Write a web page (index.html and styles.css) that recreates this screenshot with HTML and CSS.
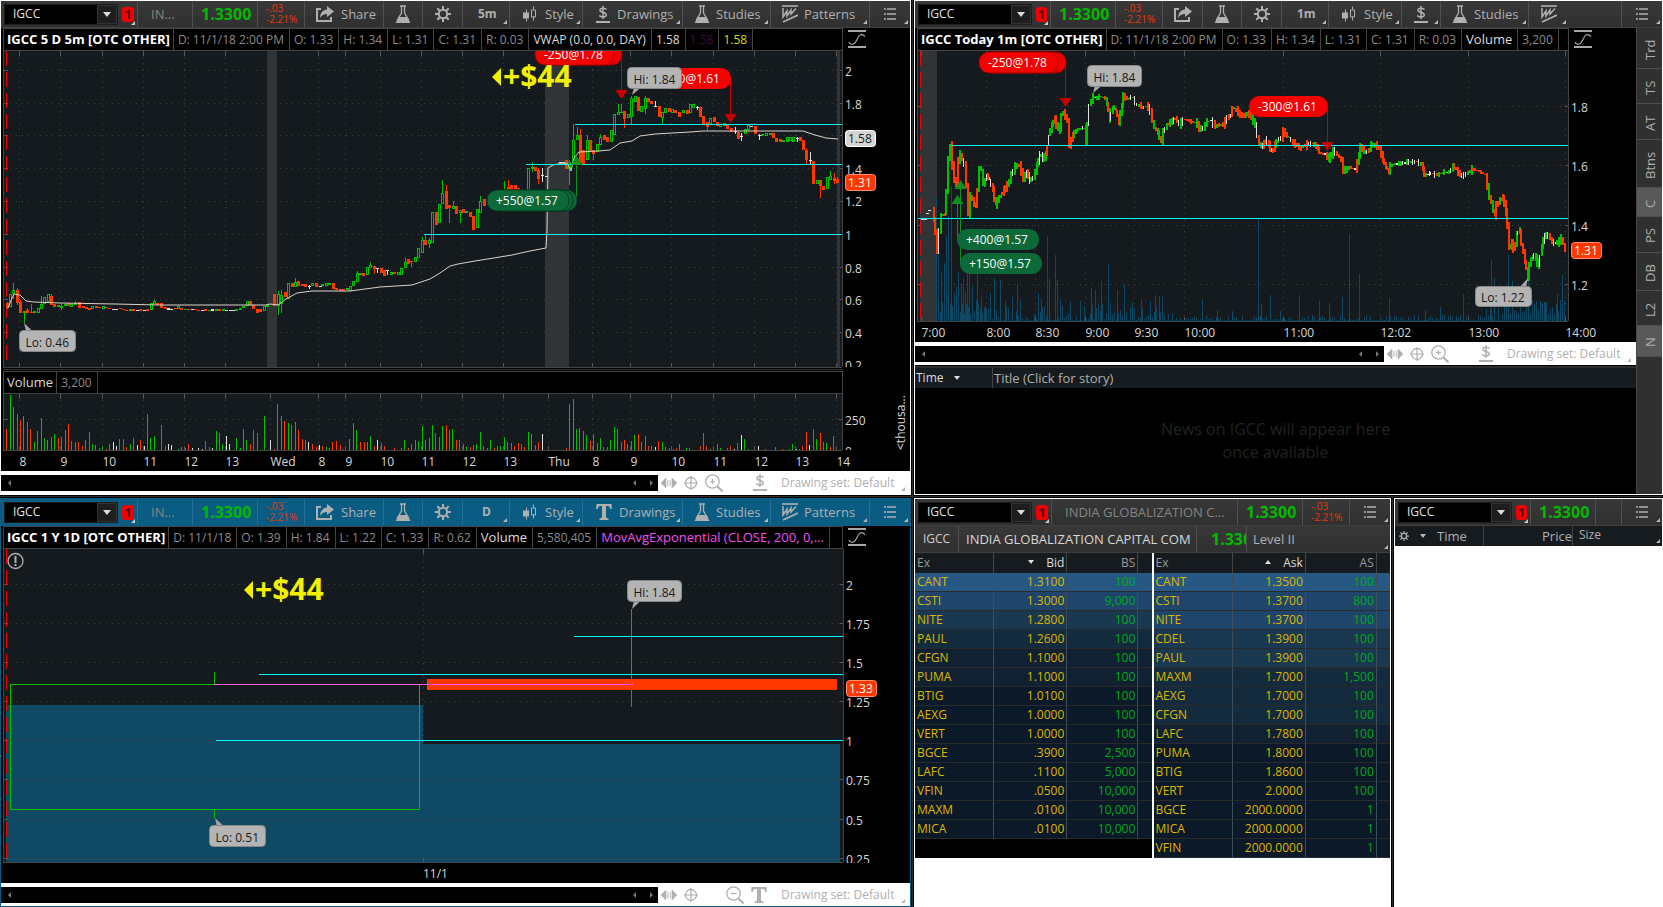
FILE: index.html
```html
<!DOCTYPE html>
<html lang="en">
<head>
<meta charset="utf-8">
<title>IGCC workspace</title>
<link rel="stylesheet" href="styles.css">
</head>
<body>
<svg class="sprite" aria-hidden="true">
  <symbol id="i-share" viewBox="0 0 18 16"><path d="M5 3H1v12h14v-4" fill="none" stroke="currentColor" stroke-width="2"/><path d="M11 0l7 5.500-7 5.500V8C8 8 5.500 9 4 12c0-5 3-8 7-8.500z" fill="currentColor"/></symbol>
  <symbol id="i-flask" viewBox="0 0 16 18"><path d="M5 1h6M6.500 1v7L2 15.500M9.500 1v7l4.500 7.500" fill="none" stroke="currentColor" stroke-width="1.300"/><path d="M4 12h8l3.500 6H.5z" fill="currentColor"/></symbol>
  <symbol id="i-gear" viewBox="0 0 16 16"><circle cx="8" cy="8" r="4.200" fill="none" stroke="currentColor" stroke-width="2"/><path d="M8 0v3M8 13v3M0 8h3M13 8h3M2.300 2.300l2.200 2.200M11.500 11.500l2.200 2.200M13.700 2.300l-2.200 2.200M4.500 11.500l-2.200 2.200" stroke="currentColor" stroke-width="2"/></symbol>
  <symbol id="i-candles" viewBox="0 0 14 16"><path d="M3.500 3v12M10.500 0v3M10.500 10v4" stroke="currentColor"/><path d="M0 6h6v6H0z" fill="currentColor"/><path d="M8.500 3.500h4v7h-4z" fill="none" stroke="currentColor"/></symbol>
  <symbol id="i-dollar" viewBox="0 0 14 17"><path d="M7 0v13M10.500 3.500C9.500 2 4 1.500 4 4.200S10.300 6 10.300 8.800 4.500 11.500 3.300 9.500" fill="none" stroke="currentColor" stroke-width="1.500"/><path d="M0 15h14v2H0z" fill="currentColor"/></symbol>
  <symbol id="i-tee" viewBox="0 0 16 16"><path d="M.5 0h15l.3 5h-1.600C14 2.500 13 2 10 2v10.500c0 1.500.8 1.700 2.500 2V16h-9v-1.500c1.700-.3 2.500-.5 2.500-2V2c-3 0-4 .5-4.200 3H.2z" fill="currentColor"/></symbol>
  <symbol id="i-pattern" viewBox="0 0 16 18"><path d="M0 1h16" stroke="currentColor" stroke-width="1.600"/><path d="M1 3v9l4-6v5l4-6v4l5-5.500" fill="none" stroke="currentColor" stroke-width="1.500"/><path d="M1 17l15-7" stroke="currentColor" stroke-width="1.800"/></symbol>
  <symbol id="i-list" viewBox="0 0 12 12"><path d="M0 1h2M3 1h9M0 6h2M3 6h9M0 11h2M3 11h9" stroke="currentColor" stroke-width="1.500"/></symbol>
  <symbol id="i-wave" viewBox="0 0 18 18"><path d="M0 1h18M0 17h18" stroke="currentColor" stroke-width="2"/><path d="M1 12c1.500 3.500 5.500 3 7.500-1.500S12.500 2 17 6.500" fill="none" stroke="currentColor" stroke-width="1.200"/></symbol>
  <symbol id="i-resize" viewBox="0 0 16 10"><path d="M0 5l5-5v10zM16 5l-5-5v10zM6.500 2v6M8 2v6M9.500 2v6" fill="currentColor" stroke="currentColor" stroke-width=".6"/></symbol>
  <symbol id="i-cross" viewBox="0 0 14 14"><circle cx="7" cy="7" r="5.500" fill="none" stroke="currentColor" stroke-width="1.300"/><path d="M7 0v14M0 7h14" stroke="currentColor" stroke-width="1.200"/></symbol>
  <symbol id="i-zoomin" viewBox="0 0 18 18"><circle cx="7.500" cy="7.500" r="6.700" fill="none" stroke="currentColor" stroke-width="1.300"/><path d="M12.500 12.500l5 5" stroke="currentColor" stroke-width="2"/><path d="M5 7.500h5M7.500 5v5" stroke="currentColor" stroke-width="1.200"/></symbol>
  <symbol id="i-zoomout" viewBox="0 0 18 18"><circle cx="7.500" cy="7.500" r="6.700" fill="none" stroke="currentColor" stroke-width="1.300"/><path d="M12.500 12.500l5 5" stroke="currentColor" stroke-width="2"/><path d="M4.500 7.500h6" stroke="currentColor" stroke-width="1.200"/></symbol>
</svg>

<main class="desk">
  <section class="panel" aria-label="5 day chart">
    <div class="toolbar">
      <div class="cell symbol"><span class="combo"><input value="IGCC" aria-label="Symbol"><button aria-label="Symbol list"></button></span><button class="link">1</button></div>
      <div class="cell name grow">IN...</div>
      <div class="cell price">1.3300</div>
      <div class="cell change"><span>-.03</span><span>-2.21%</span></div>
      <button class="cell w79 share"><svg class="i18"><use href="#i-share"/></svg>Share</button>
      <button class="cell w39" aria-label="Studies"><svg class="i16"><use href="#i-flask"/></svg></button>
      <button class="cell w40" aria-label="Settings"><svg class="i16g"><use href="#i-gear"/></svg></button>
      <button class="cell w47 corner strong">5m</button>
      <button class="cell w73 corner"><svg class="i14"><use href="#i-candles"/></svg>Style</button>
      <button class="cell w100 corner"><svg class="i14"><use href="#i-dollar"/></svg>Drawings</button>
      <button class="cell w88 corner"><svg class="i16"><use href="#i-flask"/></svg>Studies</button>
      <button class="cell w99 corner"><svg class="i16"><use href="#i-pattern"/></svg>Patterns</button>
      <button class="cell w40 corner" aria-label="Menu"><svg class="i12"><use href="#i-list"/></svg></button>
    </div>
    <div class="legendrow">
      <div class="legend"><b>IGCC 5 D 5m [OTC OTHER]</b><span>D: 11/1/18 2:00 PM</span><span>O: 1.33</span><span>H: 1.34</span><span>L: 1.31</span><span>C: 1.31</span><span>R: 0.03</span><span class="lit">VWAP (0.0, 0.0, DAY)</span><span class="lit">1.58</span><span class="plum">1.58</span><span class="yellow">1.58</span></div>
      <svg class="wave"><use href="#i-wave"/></svg>
    </div>
    <div class="plot" id="five"></div>
    <div class="legendrow sub"><div class="legend"><span class="lit word">Volume</span><span>3,200</span></div><i class="wave"></i></div>
    <div class="plot vol" id="fivevol"></div>
    <div class="foot">
      <div class="scroll"><button class="l" aria-label="Left end"></button><button class="l" aria-label="Left"></button><button class="r" aria-label="Right"></button></div>
      <div class="tools"><button aria-label="Fit"><svg class="i16r"><use href="#i-resize"/></svg></button><button aria-label="Crosshair"><svg class="i14c"><use href="#i-cross"/></svg></button><button aria-label="Zoom in"><svg class="i18z"><use href="#i-zoomin"/></svg></button><button class="last" aria-label="Drawing tool"><svg class="i14"><use href="#i-dollar"/></svg></button></div>
      <button class="set corner">Drawing set: Default</button>
    </div>
  </section>

  <section class="panel" aria-label="Today chart">
    <div class="toolbar">
      <div class="cell symbol narrow"><span class="combo"><input value="IGCC" aria-label="Symbol"><button aria-label="Symbol list"></button></span><button class="link">1</button></div>
      <div class="cell price">1.3300</div>
      <div class="cell change"><span>-.03</span><span>-2.21%</span></div>
      <button class="cell w40" aria-label="Share"><svg class="i18"><use href="#i-share"/></svg></button>
      <button class="cell w39" aria-label="Studies"><svg class="i16"><use href="#i-flask"/></svg></button>
      <button class="cell w40" aria-label="Settings"><svg class="i16g"><use href="#i-gear"/></svg></button>
      <button class="cell w47 corner strong">1m</button>
      <button class="cell w73 corner"><svg class="i14"><use href="#i-candles"/></svg>Style</button>
      <button class="cell w39 corner" aria-label="Drawings"><svg class="i14"><use href="#i-dollar"/></svg></button>
      <button class="cell w88 corner"><svg class="i16"><use href="#i-flask"/></svg>Studies</button>
      <button class="cell w39 corner open" aria-label="Patterns"><svg class="i16"><use href="#i-pattern"/></svg></button>
      <div class="cell grow"></div>
      <button class="cell w40 corner" aria-label="Menu"><svg class="i12"><use href="#i-list"/></svg></button>
    </div>
    <div class="split">
      <div class="stack">
        <div class="legendrow">
          <div class="legend"><b>IGCC Today 1m [OTC OTHER]</b><span>D: 11/1/18 2:00 PM</span><span>O: 1.33</span><span>H: 1.34</span><span>L: 1.31</span><span>C: 1.31</span><span>R: 0.03</span><span class="lit word">Volume</span><span>3,200</span></div>
          <svg class="wave"><use href="#i-wave"/></svg>
        </div>
        <div class="plot" id="today"></div>
        <div class="foot">
          <div class="scroll"><button class="l" aria-label="Left end"></button><button class="l" aria-label="Left"></button><button class="r" aria-label="Right"></button></div>
          <div class="tools"><button aria-label="Fit"><svg class="i16r"><use href="#i-resize"/></svg></button><button aria-label="Crosshair"><svg class="i14c"><use href="#i-cross"/></svg></button><button aria-label="Zoom in"><svg class="i18z"><use href="#i-zoomin"/></svg></button><button class="last" aria-label="Drawing tool"><svg class="i14"><use href="#i-dollar"/></svg></button></div>
          <button class="set corner">Drawing set: Default</button>
        </div>
        <div class="news">
          <div class="newshead"><button class="sort">Time</button><span>Title (Click for story)</span></div>
          <p>News on IGCC will appear here<br>once available</p>
        </div>
      </div>
      <nav class="rail"><button class="h41">Trd</button><button class="h35">TS</button><button class="h36">AT</button><button class="h48">Btns</button><button class="h29 on">C</button><button class="h36">PS</button><button class="h38">DB</button><button class="h35">L2</button><button class="h31 on">N</button></nav>
    </div>
  </section>

  <section class="panel active" aria-label="1 year chart">
    <div class="toolbar">
      <div class="cell symbol"><span class="combo"><input value="IGCC" aria-label="Symbol"><button aria-label="Symbol list"></button></span><button class="link">1</button></div>
      <div class="cell name grow">IN...</div>
      <div class="cell price">1.3300</div>
      <div class="cell change"><span>-.03</span><span>-2.21%</span></div>
      <button class="cell w79 share"><svg class="i18"><use href="#i-share"/></svg>Share</button>
      <button class="cell w39" aria-label="Studies"><svg class="i16"><use href="#i-flask"/></svg></button>
      <button class="cell w40" aria-label="Settings"><svg class="i16g"><use href="#i-gear"/></svg></button>
      <button class="cell w47 corner strong wide">D</button>
      <button class="cell w73 corner"><svg class="i14"><use href="#i-candles"/></svg>Style</button>
      <button class="cell w100 corner"><svg class="i16g"><use href="#i-tee"/></svg>Drawings</button>
      <button class="cell w88 corner"><svg class="i16"><use href="#i-flask"/></svg>Studies</button>
      <button class="cell w99 corner"><svg class="i16"><use href="#i-pattern"/></svg>Patterns</button>
      <button class="cell w40 corner" aria-label="Menu"><svg class="i12"><use href="#i-list"/></svg></button>
    </div>
    <div class="legendrow">
      <div class="legend"><b>IGCC 1 Y 1D [OTC OTHER]</b><span>D: 11/1/18</span><span>O: 1.39</span><span>H: 1.84</span><span>L: 1.22</span><span>C: 1.33</span><span>R: 0.62</span><span class="lit word">Volume</span><span>5,580,405</span><span class="pink word">MovAvgExponential (CLOSE, 200, 0,...</span></div>
      <svg class="wave"><use href="#i-wave"/></svg>
    </div>
    <div class="plot" id="year"></div>
    <div class="foot">
      <div class="scroll"><button class="l" aria-label="Left end"></button><button class="l" aria-label="Left"></button><button class="r" aria-label="Right"></button></div>
      <div class="tools"><button aria-label="Fit"><svg class="i16r"><use href="#i-resize"/></svg></button><button aria-label="Crosshair"><svg class="i14c"><use href="#i-cross"/></svg></button><button class="last" aria-label="Zoom out"><svg class="i18z"><use href="#i-zoomout"/></svg></button><button aria-label="Text tool"><svg class="i16g"><use href="#i-tee"/></svg></button></div>
      <button class="set corner">Drawing set: Default</button>
    </div>
  </section>

  <div class="pair">
    <section class="panel" aria-label="Level II">
      <div class="toolbar">
        <div class="cell symbol"><span class="combo"><input value="IGCC" aria-label="Symbol"><button aria-label="Symbol list"></button></span><button class="link">1</button></div>
        <div class="cell name grow">INDIA GLOBALIZATION C...</div>
        <div class="cell price">1.3300</div>
        <div class="cell change"><span>-.03</span><span>-2.21%</span></div>
        <button class="cell w40 corner" aria-label="Menu"><svg class="i12"><use href="#i-list"/></svg></button>
      </div>
      <div class="toolbar second">
        <div class="cell w44">IGCC</div>
        <div class="cell full">INDIA GLOBALIZATION CAPITAL COM</div>
        <div class="cell price cut">1.3300</div>
        <div class="cell grow corner level">Level II</div>
      </div>
      <div class="book" id="book"></div>
    </section>
    <section class="panel" aria-label="Time and sales">
      <div class="toolbar">
        <div class="cell symbol narrow"><span class="combo"><input value="IGCC" aria-label="Symbol"><button aria-label="Symbol list"></button></span><button class="link">1</button></div>
        <div class="cell price">1.3300</div>
        <div class="cell grow"></div>
        <button class="cell w40 corner" aria-label="Menu"><svg class="i12"><use href="#i-list"/></svg></button>
      </div>
      <div class="tape"><div class="time"><svg class="i10"><use href="#i-gear"/></svg><i></i>Time</div><div class="pr">Price</div><div class="size corner">Size</div></div>
    </section>
  </div>
</main>
<script src="app.js"></script>
</body>
</html>
```

FILE: styles.css
```css
* { box-sizing: border-box; }
body { margin: 0; background: #000; color: #b0b0b0; font: 12px/16px "Open Sans", "Noto Sans", sans-serif; }
button, input { font: inherit; color: inherit; border: 0; background: none; padding: 0; margin: 0; text-align: left; }
.sprite { position: absolute; width: 0; height: 0; }

.desk { display: grid; grid-template-columns: 911fr 749fr; grid-template-rows: 495fr 409fr; gap: 3px; height: 100vh; min-height: 640px; background: #2c2c2c; overflow: hidden; }
.panel { display: flex; flex-direction: column; min-width: 0; min-height: 0; border: 1px solid #fff; background: #fff; box-shadow: 0 0 0 1px #000; overflow: hidden; }
.panel.active { border-color: #0b5c82; }
.pair { display: grid; grid-template-columns: 477fr 269fr; gap: 3px; min-width: 0; min-height: 0; }

.toolbar { display: flex; flex: none; height: 27px; background: linear-gradient(#383838, #303030); border-bottom: 1px solid #3f3f3f; font-size: 13px; }
.active .toolbar { background: #0b5c82; border-color: #0b5c82; }
.cell { position: relative; display: flex; align-items: center; flex: none; justify-content: flex-start; gap: 8px; padding: 0 10px; border-right: 1px solid #505050; white-space: nowrap; overflow: hidden; }
.active .cell { border-color: #20709a; }
.cell:last-child { border-right: 0; }
.cell svg { flex: none; }
.cell.grow { flex: 1 1 0; min-width: 0; }
.symbol { width: 137px; padding: 0 3px; gap: 4px; }
.symbol.narrow { width: 136px; }
.combo { display: flex; width: 114px; height: 21px; background: #000; border: 1px solid #1b1b1b; }
.combo input { flex: 1; min-width: 0; padding-left: 8px; color: #e4e4e4; outline: 0; font-size: 12px; }
.combo button { width: 20px; background: #1e1e1e; border: 1px solid #333; display: grid; place-items: center; }
.combo button::after { content: ""; border: 4px solid transparent; border-top: 5px solid #ddd; border-bottom: 0; }
.link { position: relative; width: 12px; height: 15px; border-radius: 3px; background: #f40000; color: #5a1010; text-align: center; line-height: 15px; font-size: 13px; font-weight: bold; }
.link::after { content: ""; position: absolute; right: -1px; bottom: -3px; border: 2px solid transparent; border-right-color: #ccc; border-bottom-color: #ccc; }
.name { padding-left: 13px; color: #868686; }
.price { width: 65px; padding: 0 0 0 8px; font-size: 16px; font-weight: bold; color: #00b900; }
.change { width: 47px; padding: 0 0 0 8px; flex-direction: column; align-items: flex-start; justify-content: center; gap: 0; font-size: 10px; line-height: 11px; color: #e23a0c; }
.w39 { width: 39px; } .w40 { width: 40px; } .w44 { width: 44px; } .w47 { width: 47px; } .w73 { width: 73px; }
.w79 { width: 79px; } .w88 { width: 88px; } .w99 { width: 99px; } .w100 { width: 100px; }
.w39, .w40, .w44 { justify-content: center; }
.share { padding-left: 11px; gap: 7px; }
.w88, .w99 { padding-left: 11px; gap: 6px; }
.w73 { padding-left: 13px; }
.w100 { padding-left: 13px; gap: 7px; }
.strong { font-size: 12px; font-weight: bold; padding-left: 15px; }
.wide { padding-left: 19px; }
.w40.corner { justify-content: flex-start; padding-left: 14px; }
.w39.corner { padding: 0 11px; }
.open { border-right: 0; }
.corner { position: relative; }
.corner::after { content: ""; position: absolute; right: 2px; bottom: 3px; border: 2px solid transparent; border-right-color: #b8b8b8; border-bottom-color: #b8b8b8; }
.i10 { width: 10px; height: 10px; } .i12 { width: 12px; height: 12px; } .i14 { width: 14px; height: 17px; } .i14c { width: 14px; height: 14px; }
.i16 { width: 16px; height: 18px; } .i16g { width: 16px; height: 16px; } .i16r { width: 16px; height: 10px; } .i18 { width: 18px; height: 16px; } .i18z { width: 18px; height: 18px; }

.legendrow { display: flex; flex: none; height: 23px; padding-left: 2px; background: #000; }
.legend { display: flex; flex: 1; min-width: 0; border: 1px solid #444; overflow: hidden; font-size: 12px; line-height: 21px; color: #8a8a8a; white-space: nowrap; }
.legend > * { padding: 0 5px 0 4px; border-right: 1px solid #444; }
.legend > :first-child { padding: 0 3px; }
.legend b { color: #fff; font-size: 13px; }
.legend .word { font-size: 13px; }
.legend .lit { color: #dcdcdc; }
.legend .plum { color: #3c0c3c; }
.legend .yellow { color: #d8d800; }
.legend .pink { color: #f050f0; }
.wave { flex: none; width: 18px; height: 18px; margin: 2px 44px 0 5px; color: #a8a8a8; }

.plot { flex: 1 1 0; min-height: 0; background: #000; overflow: hidden; }
.plot.vol { flex: none; height: 77px; }
.plot svg { display: block; }
.plot text { font-size: 12px; fill: #d8d8d8; }
.plot .dark { fill: #181818; }
.plot .white { fill: #fff; }
.plot .gain { font-size: 30px; font-weight: bold; fill: #f0f000; }

.foot { display: flex; flex: none; align-items: center; height: 23px; background: #fff; color: #b0b0b0; }
.scroll { display: flex; flex: 1; align-items: center; justify-content: flex-end; gap: 14px; height: 16px; padding: 0 5px 0 7px; background: #000; }
.scroll button { border: 3px solid transparent; }
.scroll .l { border-right-color: #777; border-left: 0; }
.scroll .l:first-child { margin-right: auto; }
.scroll .r { border-left-color: #777; border-right: 0; }
.tools { display: flex; flex: none; align-items: center; width: 111px; gap: 7px; padding: 0 2px 0 3px; }
.tools button { display: flex; }
.tools .last { margin-left: auto; }
.set { flex: none; width: 141px; padding-left: 12px; font-size: 12px; }
.set.corner::after { right: 5px; bottom: 0; }

.split { display: flex; flex: 1; min-height: 0; }
.stack { display: flex; flex: 1; flex-direction: column; min-width: 0; }
.news { flex: none; height: 129px; border-top: 1px solid #000; background: #000; }
.newshead { display: flex; height: 22px; align-items: center; border-top: 2px solid #2c2c2c; background: #161b1f; font-size: 12px; }
.newshead .sort { display: flex; align-items: center; gap: 10px; width: 78px; padding-left: 1px; height: 20px; border-right: 1px solid #444; color: #dcdcdc; }
.sort::after { content: ""; border: 3px solid transparent; border-top: 4px solid #ddd; border-bottom: 0; }
.newshead span { padding-left: 1px; font-size: 13px; }
.news p { margin: 30px 0 0; text-align: center; font-size: 16px; line-height: 23px; color: #222; }
.rail { flex: none; width: 26px; background: #303030; border-left: 1px solid #484848; }
.rail button { display: flex; align-items: center; justify-content: center; width: 100%; padding-bottom: 3px; border-top: 1px solid #505050; writing-mode: vertical-rl; transform: rotate(180deg); font-size: 13px; }
.rail .on { background: #585858; }
.h29 { height: 29px; } .h31 { height: 31px; } .h35 { height: 35px; } .h36 { height: 36px; } .h38 { height: 38px; } .h41 { height: 41px; } .h48 { height: 48px; }

.second .w44 { width: 44px; color: #d0d0d0; font-size: 12px; }
.second .full { flex: 0 1 238px; padding: 0 4px 0 7px; color: #d8d8d8; font-size: 13px; }
.second .cut { width: 50px; padding-left: 14px; }
.second .level { padding-left: 6px; font-size: 13px; }
.book { display: grid; grid-template-columns: 1fr 1fr; gap: 2px; }
.side { background: #000; }
.side table { width: 100%; table-layout: fixed; border-collapse: separate; border-spacing: 0; }
.side th, .side td { height: 19px; padding: 0 2px; border-right: 1px solid #3d4d5c; border-bottom: 1px solid #2a2a2a; font-weight: normal; text-align: right; line-height: 18px; }
.side th { height: 20px; background: #161b1f; border-color: #444; border-bottom: 0; color: #999; }
.side th.key { color: #ddd; }
.side th.key i { display: inline-block; margin: 0 12px 3px 0; border: 3px solid transparent; }
.side th.key i.down { border-top: 4px solid #ddd; border-bottom: 0; }
.side th.key i.up { border-bottom: 4px solid #ddd; border-top: 0; }
.side td { color: #dcb800; }
.side th:first-child, .side td:first-child { text-align: left; }
.side td.qty { color: #00aa1c; }
.side th:last-child, .side td:last-child { border-right: 0; }
.c1 { width: 79px; } .c2 { width: 31%; } .c3 { width: 30%; }
.t1 { background: #265883; } .t2 { background: #1f466a; } .t3 { background: #1a3850; } .t4 { background: #142b3d; } .t5 { background: #112132; } .t6 { background: #0c1928; }

.tape { display: flex; height: 20px; background: #161b1f; align-items: center; font-size: 13px; }
.time { display: flex; align-items: center; width: 89px; height: 20px; padding-left: 4px; gap: 11px; border-right: 1px solid #444; }
.time i { border: 3px solid transparent; border-top: 4px solid #bbb; border-bottom: 0; }
.pr { width: 89px; height: 20px; line-height: 20px; text-align: right; border-right: 1px solid #444; }
.size { flex: 1; height: 20px; padding-left: 6px; font-size: 12px; line-height: 18px; }
```

FILE: app.js
```js
const GREEN = '#00c000', RED = '#ff3800', WHITE = '#e0e0e0', CYAN = '#00f8f8', GRID = '#3c4144', BG = '#151a1e';
const INK = { G: GREEN, R: RED, W: WHITE };

/* A frame maps design coordinates onto the container; only positions stretch, never glyphs. */
function frame(id, x0, y0, w0, h0) {
  const el = document.getElementById(id);
  const w = el.clientWidth, h = el.clientHeight, kx = w / w0, ky = h / h0;
  const out = [];
  return {
    X: v => (v - x0) * kx, Y: v => (v - y0) * ky,
    rect(x, y, rw, rh, fill, extra = '') { out.push(`<rect x="${this.X(x)}" y="${this.Y(y)}" width="${Math.max(0, rw * kx)}" height="${Math.max(0, rh * ky)}" fill="${fill}" ${extra}/>`); },
    line(x1, y1, x2, y2, c, extra = '') { out.push(`<path d="M${this.X(x1)} ${this.Y(y1)}L${this.X(x2)} ${this.Y(y2)}" stroke="${c}" fill="none" ${extra}/>`); },
    poly(pts, c) { out.push(`<polyline points="${pts.map(p => this.X(p[0]) + ',' + this.Y(p[1])).join(' ')}" fill="none" stroke="${c}"/>`); },
    fill(pts, c) { out.push(`<polygon points="${pts.map(p => this.X(p[0]) + ',' + this.Y(p[1])).join(' ')}" fill="${c}"/>`); },
    text(x, y, s, cls = '', extra = '') { out.push(`<text x="${this.X(x)}" y="${this.Y(y)}" class="${cls}" ${extra}>${s}</text>`); },
    raw(s) { out.push(s); },
    done() { el.innerHTML = `<svg width="${w}" height="${h}">${out.join('')}</svg>`; }
  };
}

function gridlines(f, xs, ys, l, t, r, b) {
  ys.forEach(y => { f.line(l, y, r, y, GRID, 'stroke-dasharray="1 5"'); f.line(l, y, l + 4, y, '#555'); f.line(r - 3, y, r, y, '#555'); });
  xs.forEach(x => { f.line(x, t, x, b, GRID, 'stroke-dasharray="1 5"'); f.line(x, t, x, t + 5, '#555'); f.line(x, b - 4, x, b, '#555'); });
}
function border(f, l, t, r, b) { f.line(l + .5, t, l + .5, b, '#444'); f.line(r + .5, t, r + .5, b, '#444'); f.line(l, b + .5, r, b + .5, '#444'); }
function callout(f, x, y, w, s, px, py) {
  const by = py > y ? y + 20 : y + 1;
  f.fill([[px, py], [px + 2, by], [px + 9, by]], '#a8a8a8');
  f.rect(x, y, w, 21, '#b4b4b4', 'rx="4" stroke="#888"');
  f.text(x + 6, y + 16, s, 'dark');
}
function tag(f, x, y, s, fill, stroke, cls) { f.rect(x + .5, y + .5, 30, 16, fill, `rx="3" stroke="${stroke}"`); f.text(x + 3, y + 13, s, cls); }
function pill(f, x, y, w, s, fill, stacked) {
  const edge = fill === '#f40000' ? '#a00000' : '#04351c';
  for (let i = stacked; i >= 0; i--) f.rect(x + i * 4, y, w, 21, fill, i || stacked ? `rx="10" stroke="${edge}" stroke-width=".8"` : 'rx="10"');
  f.text(x + 9, y + 15, s, 'white');
}
function arrow(f, x, y, down, c) { f.fill(down ? [[x - 6, y], [x + 6, y], [x, y + 9]] : [[x - 6, y + 9], [x + 6, y + 9], [x, y]], c); }
function gain(f, x, y) { f.fill([[x, y - 10], [x + 9, y - 19], [x + 9, y - 1]], '#f0f000'); f.text(x + 11, y, '+$44', 'gain'); }

/* x, colour, body top, body bottom, [high], [low] */
const CANDLES = `7R303,308,302,309 10G294,307 13G290,294,283,299 17R290,303,288,305 20R302,313,300,313 24G311,313,311,323 27R310,313,308 31R312,313,304 34G311,313 38G308,313
41G304,309,296 44G297,304 48G294,302 51R296,305,294 54R304,307 58G305,307 61G306,308,304,310 65G304,306 68R303,306 71G304,307 75G303,305,301 79R302,308 83R306,308 86R307,309 89R308,310 92G306,309 96R306,308 99R307,308
103G306,309 106R307,308 109R308,309 113W309,310 116W309,310 120R308,309 123R309,310 126R310,311 130G309,311 133R309,311 137W310,311 140R309,311 144W310,311 147R309,311 151G303,310 154G301,304,300 157R303,305 161R303,308 165R307,309 168W308,310 171W309,310 175R308,309 178G306,309
181R308,310 185G309,310 188R309,310 192W309,310 195R309,310 198R310,311 202W310,311 205R309,311 209G310,311 212W309,311 216G309,311 219R309,311 223G309,311 226W310,311 230W310,311 233W310,311 236G309,311 240G308,310 243G306,308 247G301,306 250R301,305 253R305,309 257R309,313 260R309,312 264G306,311 267G305,307
274R294,306 278G294,306,291,315 281G295,304,290,313 285R292,297 288G283,299 292R283,287 295G282,287,278 298R281,286 302R284,286 305R284,287 309W286,287,285,289 312G283,286 316R283,287 320W286,287 322G284,286 326G283,286 329G283,285 333R283,289 336R288,290 340R289,291 343R289,291 347G288,290
350G286,291 353G281,286 357G273,282,271 360G273,275 363R273,276 367G267,275 370G265,268,262 374R266,269,266,274 377W268,269,268,273 381R268,273 384R270,276 387W270,271,270,275 391G272,275 394R272,274 398G272,275 401G268,275 405G262,268,258 408R259,264 411R261,262,261,267 415G257,262 418G248,258
422G240,253,237 425R240,245,235 429G240,244,238,248 432G212,243 436R212,225 439G204,223 442G193,204,180 446R191,209,185 449R205,208,205,223 453G206,209,201 456R206,214 460G210,213,210,223 463R209,213 466G211,213 470R212,217 473R216,230 477G209,228 480G201,213,196 484R199,206 504G192,200,181 508R187,190,180 511R185,190 515R185,190 518R188,192
528G168,191 532G167,169,162,172 535R167,171 538R170,179,168,184 542W175,176,168,182 546W176,177 560W162,163 563W162,163 566R160,169 569G162,169,160,185 573G140,165,124 577G135,140,127 580R135,163,129 583R150,164 587G140,160,135 590R140,151 593R150,154,150,160 597G144,152 600G137,145,134 604R135,140 607R137,142 611G130,142
614G114,135 618G112,115,104 621G112,113,104 624R111,119,111,128 628G114,118 631G98,117,96,124 635G96,102 638R97,111 641G106,112 645G98,109,96,114 648R98,102 651R101,104 655W106,107,101 659R106,117 662G112,118,112,124 665G108,113 669R108,112 672G109,113 675R110,113 679R112,117 683G110,113 687R110,114 690G104,113 693G104,108
697W107,108,106,110 700R107,117 703R116,124 707R122,127,122,130 710G118,124 714R117,122 717R122,126 720G124,127 724G123,126 727R125,129 731R128,132 735W131,132,127,134 738R132,139 741W136,137,133,141 745G129,134 748G125,130 751W126,127 755R126,134 759W135,136,134,140 762G134,136 766G133,136 770G133,135 773R133,138
776R138,142 780R139,142 783G140,142 787G137,142 790G137,141 793G137,142 797W138,139,137,142 800R137,141 803R140,150 806R150,160,148,164 810W160,161,152,164 813R161,184 817G180,184 820R180,186,180,198 823R186,190 827G177,189 830G176,180,171 834R178,181,173,184 837R179,183,177`;
const VOLUME = `6R21 10G55 13G43 17R36 20R30 23G34 27R28 30R21 34G8 37G19 41G32 44G12 47G10 51R13 54G16 58R12 61G13 65G20 68R26 71G9 75G8 78R8 82R4 85R10 89R18 92G6 95R5 99R2 102G4 106R1 109R6 113W8 116W4 119R11 123R11 126R3 130G6 133R12 137W5 140R10 144W4 147R36 150G12 154G14 161R25 165R4 168W6 171W5 178G1 181R3 185G2 188R6 192W2 198W2 202W1 205R9 209G3 212W2 216G19 219R17 222G6 226W14 229W6 236G12 240G2 243G21 246G10 250R6 253R20 257R17 264G34 270W10 274R1 277G46 281G34 284R29 288G27 291R25 295G28 298R20 302R11 305R10 308W8 312R6 316R3 319W5 322R4 326G3 329G2 332R8 336R9 340R5 343R1 349G11 353G27 356G20 360R8 364R8 367G8 370G14 374R4 377W10 381R7 384R4 394R2 401G2 404G10 408R2 411R6 415G10 418G9 422G24 425R10 429G12 432G25 435R17 439G13 442G24 446R25 449R20 452G21 456R10 459G10 463R6 466G3 470R3 473R5 476G6 480G18 483R4 487R2 490G10 494R2 497G4 500G4 504G13 507R8 511R7 514R4 518R7 521R6 524R3 528G18 531G16 535R5 538R8 542W16 566R2 569G46 573G51 576G21 579R22 583G19 586G15 590R9 593R16 597G7 600G12 603R3 607R3 610G10 614G23 617G21 621R8 624R10 627G6 631G9 634G15 638R16 641G8 645G14 648R4 651R4 655W3 658R9 662G8 665G3 669R2 673G1 676R2 679G6 686G2 689G2 700R4 703R17 706R4 710G1 713R1 717R6 720G2 727R2 730R4 734W1 737R7 741W15 744G11 748G1 758W4 765G1 775R3 782R1 789G1 792G6 796W1 799R1 802R4 806R18 809W5 813R21 816G11 820R17 823G8 826G7 830R3 833R14`;
const VWAP = [[8,308],[12,298],[14,294],[20,295],[26,301],[34,302],[60,303],[115,304],[160,305],[240,305],[266,305],[270,304],[278,305],[286,299],[297,293],[312,291],[350,291],[380,287],[412,285],[424,281],[430,279],[440,273],[450,266],[458,264],[475,261],[500,257],[512,255],[530,251],[546,248],[547,230],[548,168],[553,165],[563,163],[568,164],[571,171],[574,158],[579,152],[598,151],[610,150],[620,143],[632,141],[640,136],[655,134],[690,132],[703,131],[803,131],[815,135],[826,138],[838,139]];
const XS = [19.5,60.5,102.5,143.5,184.5,225.5,270.5,318.5,345.5,380.5,421.5,462.5,503.5,548.5,592.5,630.5,671.5,713.5,754.5,795.5,836.5];
const HOURS = ['8','9','10','11','12','13','Wed','8','9','10','11','12','13','Thu','8','9','10','11','12','13','14'];

function drawFive() {
  const f = frame('five', 1, 51, 909, 320);
  f.rect(4, 51, 838, 316, BG);
  gridlines(f, XS, [70.5,103.5,135.5,168.5,201.5,234.5,267.5,299.5,332.5], 4, 51, 842, 367);
  [[267,10],[545,24],[837,3]].forEach(([x, w]) => f.rect(x, 51, w, 316, '#313437'));
  f.line(6.5, 51, 6.5, 363, '#f40000', 'stroke-dasharray="15 6"');
  CANDLES.split(/\s+/).forEach(s => {
    const [, x, c, rest] = s.match(/^(\d+)([GRW])(.+)$/), [t, b, hi = t, lo = b] = rest.split(',').map(Number), n = +x;
    f.line(n + .5, hi, n + .5, lo, INK[c]);
    if (c === 'G' && b - t > 2) f.rect(n - .5, t + .5, 2, b - t - 1, BG, `stroke="${GREEN}"`);
    else f.rect(n - 1, t, 3, Math.max(1, b - t), INK[c]);
  });
  f.poly(VWAP, '#ddd2c8');
  f.line(575, 124.5, 842, 124.5, CYAN); f.line(526, 164.5, 842, 164.5, CYAN); f.line(424, 234.5, 842, 234.5, CYAN);
  f.line(621.5, 60, 621.5, 92, '#c80000'); arrow(f, 621.5, 90, true, '#c80000');
  f.line(730.5, 78, 730.5, 116, '#c80000'); arrow(f, 730.5, 114, true, '#c80000');
  pill(f, 535, 44, 79, '-250@1.78', '#f40000', 2); pill(f, 652, 68, 79, '-300@1.61', '#f40000', 0);
  f.line(576.5, 162, 576.5, 202, '#109020'); arrow(f, 576.5, 156, false, '#109020');
  pill(f, 487, 190, 82, '+550@1.57', '#0b6a38', 2);
  callout(f, 627.5, 67.5, 54, 'Hi: 1.84', 632, 95); callout(f, 19.5, 330.5, 56, 'Lo: 0.46', 24, 323);
  gain(f, 492, 87);
  border(f, 3, 51, 842, 367);
  [['2',76],['1.8',109],['1.4',174],['1.2',206],['1',240],['0.8',273],['0.6',305],['0.4',338]].forEach(([s, y]) => f.text(845, y, s));
  f.raw(`<svg width="100%" height="${f.Y(367)}">`); f.text(845, 370, '0.2'); f.raw('</svg>');
  f.line(3, 369.5, 842, 369.5, '#333');
  tag(f, 845, 130, '1.58', '#d4d4d4', '#fff', 'dark'); tag(f, 845, 174, '1.31', '#ff3800', '#ff9070', 'white');
  f.done();

  const v = frame('fivevol', 1, 394, 909, 77);
  v.rect(4, 394, 838, 56, BG);
  gridlines(v, XS, [419.5], 4, 394, 842, 450);
  VOLUME.split(' ').forEach(s => { const [, x, c, h] = s.match(/^(\d+)([GRW])(\d+)$/); v.rect(+x, 450 - h, 1, +h, INK[c]); });
  border(v, 3, 394, 842, 450);
  XS.forEach((x, i) => v.text(x, 466, HOURS[i]));
  v.text(845, 425, '250');
  v.raw(`<svg width="100%" height="${v.Y(450)}">`); v.text(845, 456, '0'); v.raw('</svg>');
  v.text(905, 450, '&lt;thousa...', '', `transform="rotate(-90 ${v.X(905)} ${v.Y(450)})"`);
  v.done();
}

const PATH = [[933,210],[934,219],[936,232],[938,250],[940,232],[942,215],[945,215],[947,190],[949,160],[951,145],[953,165],[955,178],[957,185],[959,160],[961,153],[963,160],[965,165],[967,185],[969,215],[971,195],[973,200],[976,207],[978,190],[980,168],[982,170],[984,185],[987,175],[990,180],[993,190],[996,205],[998,200],[1001,195],[1004,190],[1008,185],[1012,175],[1016,166],[1020,165],[1024,178],[1027,172],[1030,180],[1034,178],[1037,165],[1040,155],[1043,158],[1046,155],[1049,135],[1052,125],[1055,118],[1057,125],[1060,130],[1062,115],[1064,112],[1066,116],[1068,122],[1070,145],[1073,135],[1077,130],[1080,128],[1085,128],[1086,142],[1088,125],[1090,105],[1093,97],[1096,98],[1100,97],[1104,97],[1107,103],[1110,120],[1113,107],[1116,110],[1119,123],[1122,105],[1124,96],[1127,99],[1130,98],[1134,97],[1136,105],[1140,105],[1143,108],[1147,106],[1151,110],[1153,120],[1155,128],[1158,132],[1162,142],[1164,132],[1167,125],[1171,122],[1176,118],[1180,125],[1184,120],[1188,120],[1192,122],[1196,122],[1200,128],[1204,128],[1208,121],[1212,121],[1216,126],[1220,125],[1224,125],[1228,118],[1231,115],[1233,108],[1237,110],[1241,115],[1245,116],[1248,113],[1252,117],[1256,125],[1258,135],[1260,145],[1263,146],[1266,140],[1269,145],[1272,152],[1275,145],[1278,140],[1282,138],[1284,131],[1287,136],[1290,138],[1294,143],[1302,148],[1308,144],[1315,144],[1320,152],[1326,155],[1329,159],[1334,151],[1338,154],[1342,160],[1344,170],[1350,168],[1356,169],[1359,155],[1361,146],[1364,152],[1368,152],[1371,145],[1376,145],[1380,149],[1383,160],[1386,167],[1389,172],[1391,165],[1396,164],[1402,163],[1410,162],[1420,162],[1423,168],[1425,175],[1432,173],[1438,175],[1445,172],[1450,172],[1453,166],[1457,170],[1461,175],[1465,175],[1469,173],[1472,169],[1480,171],[1486,175],[1488,187],[1492,203],[1495,215],[1497,205],[1500,200],[1503,197],[1506,212],[1508,225],[1509,248],[1512,243],[1514,250],[1517,235],[1520,229],[1522,245],[1525,260],[1528,278],[1530,265],[1533,255],[1536,258],[1539,266],[1542,245],[1545,236],[1549,235],[1553,242],[1558,243],[1562,238],[1565,250]];
const SPIKES = '936,123 938,66 941,50 944,58 946,85 948,105 951,135 954,28 956,34 958,49 961,37 963,43 965,30 967,64 969,48 972,35 977,48 981,26 985,15 990,28 994,43 1000,41 1005,20 1012,24 1017,37 1020,22 1038,28 1041,22 1047,85 1049,42 1055,66 1057,41 1060,22 1070,20 1080,20 1091,33 1095,31 1101,40 1108,57 1117,31 1124,37 1132,19 1141,22 1150,20 1155,26 1159,25 1162,24 1202,22 1217,11 1232,10 1258,102 1261,17 1270,26 1280,10 1299,26 1319,20 1329,18 1342,24 1349,87 1359,47 1389,23 1425,11 1440,14 1463,27 1491,61 1494,43 1508,66 1512,40 1528,50 1534,17 1540,20 1545,19 1556,17 1557,27 1562,46';

function drawToday() {
  const f = frame('today', 915, 51, 721, 291);
  const xs = [921.5,986.5,1035.5,1085.5,1134.5,1184.5,1283.5,1380.5,1468.5,1565.5];
  f.rect(918, 51, 650, 270, BG);
  f.rect(920, 51, 17, 270, '#313437');
  gridlines(f, xs, [106.5,165.5,225.5,284.5], 918, 51, 1568, 321);
  f.line(920.5, 51, 920.5, 321, '#f40000', 'stroke-dasharray="15 6"');
  let seed = 11;
  const rnd = () => (seed = (seed * 1103515245 + 12345) % 2147483648) / 2147483648;
  for (let x = 938; x < 1566; x += 2) {
    const busy = x < 1165 ? 18 : x > 1485 ? 18 : x < 1200 ? 10 : 6;
    const h = 1 + Math.floor(Math.pow(rnd(), 2) * busy) + (x < 990 || x > 1500 ? 6 : 0);
    f.rect(x, 321 - h, 1, h, '#0e4560');
  }
  SPIKES.split(' ').forEach(p => { const [x, h] = p.split(',').map(Number); f.rect(x, 321 - h, 1, h, '#0e4a68'); });
  for (let i = 1; i < PATH.length; i++) {
    const [ax, ay] = PATH[i - 1], [bx, by] = PATH[i], n = Math.max(1, Math.round((bx - ax) / 2));
    for (let k = 0; k < n; k++) {
      const y1 = ay + (by - ay) * k / n, y2 = ay + (by - ay) * (k + 1) / n, x = Math.round(ax + (bx - ax) * k / n);
      const flat = Math.abs(by - ay) < 3, j = flat ? rnd() * 7 : rnd() * 9;
      const c = rnd() < (flat ? .4 : .14) ? WHITE : rnd() < .18 ? (y2 > y1 ? GREEN : RED) : (y2 > y1 ? RED : GREEN);
      const t = Math.round(Math.min(y1, y2) - j / 2), h = Math.max(1, Math.round(Math.abs(y2 - y1) + j));
      f.rect(x, t, c === WHITE ? (h < 3 ? 3 : 1) : 2, h, c);
    }
  }
  [[921,219],[924,219],[926,213],[928,210]].forEach(([x, y]) => f.rect(x, y, 3, 1, WHITE));
  f.line(951, 145.5, 1568, 145.5, CYAN); f.line(918, 218.5, 1568, 218.5, CYAN);
  f.line(1065.5, 62, 1065.5, 100, '#c80000'); arrow(f, 1065.5, 98, true, '#c80000');
  f.line(1327.5, 106, 1327.5, 144, '#c80000'); arrow(f, 1327.5, 142, true, '#c80000');
  pill(f, 979, 52, 79, '-250@1.78', '#f40000', 2); pill(f, 1249, 96, 79, '-300@1.61', '#f40000', 0);
  f.line(957.5, 200, 957.5, 240, '#109020'); f.line(960.5, 186, 960.5, 264, '#109020');
  arrow(f, 957.5, 195, false, '#109020'); arrow(f, 960.5, 180, false, '#109020');
  pill(f, 957, 229, 82, '+400@1.57', '#0b6a38', 0); pill(f, 960, 253, 82, '+150@1.57', '#0b6a38', 0);
  callout(f, 1087.5, 65.5, 54, 'Hi: 1.84', 1093, 93);
  f.fill([[1528, 278], [1519, 288], [1526, 288]], '#a8a8a8');
  f.rect(1475.5, 286.5, 56, 20, '#b4b4b4', 'rx="4" stroke="#888"'); f.text(1481, 302, 'Lo: 1.22', 'dark');
  border(f, 917, 51, 1568, 321);
  ['7:00','8:00','8:30','9:00','9:30','10:00','11:00','12:02','13:00','14:00'].forEach((s, i) => f.text(xs[i], 337, s));
  [['1.8',112],['1.6',171],['1.4',231],['1.2',290]].forEach(([s, y]) => f.text(1571, y, s));
  tag(f, 1571, 242, '1.31', '#ff3800', '#ff9070', 'white');
  f.done();
}

function drawYear() {
  const f = frame('year', 1, 549, 909, 334);
  f.rect(4, 549, 839, 313, BG);
  f.rect(6, 705, 417, 157, '#104963'); f.rect(423, 744, 417, 118, '#104963');
  gridlines(f, [423.5], [584.5,623.5,662.5,701.5,740.5,779.5,819.5,858.5], 4, 549, 843, 862);
  f.line(6.5, 549, 6.5, 861, '#f40000', 'stroke-dasharray="15 6"');
  f.rect(10.5, 684.5, 409, 125, 'none', `stroke="${GREEN}"`);
  f.line(214.5, 672, 214.5, 684, GREEN); f.line(214.5, 810, 214.5, 818, GREEN);
  f.line(631.5, 609, 631.5, 707, RED); f.rect(427, 679, 410, 11, RED);
  f.line(214, 684.5, 633, 684.5, '#ff60ff');
  f.line(259, 674.5, 843, 674.5, CYAN); f.line(574, 636.5, 843, 636.5, CYAN); f.line(216, 740.5, 843, 740.5, CYAN);
  callout(f, 627.5, 580.5, 54, 'Hi: 1.84', 632, 609); callout(f, 209.5, 825.5, 56, 'Lo: 0.51', 215, 818);
  f.raw(`<circle cx="${f.X(15.5)}" cy="${f.Y(561)}" r="7.500" fill="none" stroke="#b0b0b0" stroke-width="1.300"/>`);
  f.line(15.5, 556, 15.5, 563, '#b0b0b0', 'stroke-width="2"'); f.line(15.5, 564, 15.5, 566, '#b0b0b0', 'stroke-width="2"');
  gain(f, 244, 600);
  border(f, 3, 549, 843, 862);
  [['2',590],['1.75',629],['1.5',668],['1.25',707],['1',746],['0.75',785],['0.5',825]].forEach(([s, y]) => f.text(846, y, s));
  f.raw(`<svg width="100%" height="${f.Y(863)}">`); f.text(846, 864, '0.25'); f.raw('</svg>');
  f.text(423, 878, '11/1');
  tag(f, 846, 680, '1.33', '#ff3800', '#ff9070', 'white');
  f.done();
}

const BIDS = 'CANT 1.3100 100 1|CSTI 1.3000 9,000 2|NITE 1.2800 100 3|PAUL 1.2600 100 4|CFGN 1.1000 100 5|PUMA 1.1000 100 5|BTIG 1.0100 100 6|AEXG 1.0000 100 6|VERT 1.0000 100 6|BGCE .3900 2,500 6|LAFC .1100 5,000 6|VFIN .0500 10,000 6|MAXM .0100 10,000 6|MICA .0100 10,000 6';
const ASKS = 'CANT 1.3500 100 1|CSTI 1.3700 800 2|NITE 1.3700 100 2|CDEL 1.3900 100 3|PAUL 1.3900 100 3|MAXM 1.7000 1,500 4|AEXG 1.7000 100 4|CFGN 1.7000 100 4|LAFC 1.7800 100 5|PUMA 1.8000 100 6|BTIG 1.8600 100 6|VERT 2.0000 100 6|BGCE 2000.0000 1 6|MICA 2000.0000 1 6|VFIN 2000.0000 1 6';
function side(rows, key, qty, dir) {
  return `<div class="side"><table><thead><tr><th class="c1">Ex</th><th class="c2 key"><i class="${dir}"></i>${key}</th><th class="c3">${qty}</th><th></th></tr></thead><tbody>` +
    rows.split('|').map(r => { const [n, p, q, t] = r.split(' '); return `<tr class="t${t}"><td>${n}</td><td>${p}</td><td class="qty">${q}</td><td></td></tr>`; }).join('') + '</tbody></table></div>';
}
document.getElementById('book').innerHTML = side(BIDS, 'Bid', 'BS', 'down') + side(ASKS, 'Ask', 'AS', 'up');

function draw() { drawFive(); drawToday(); drawYear(); }
draw();
addEventListener('resize', draw);
```
